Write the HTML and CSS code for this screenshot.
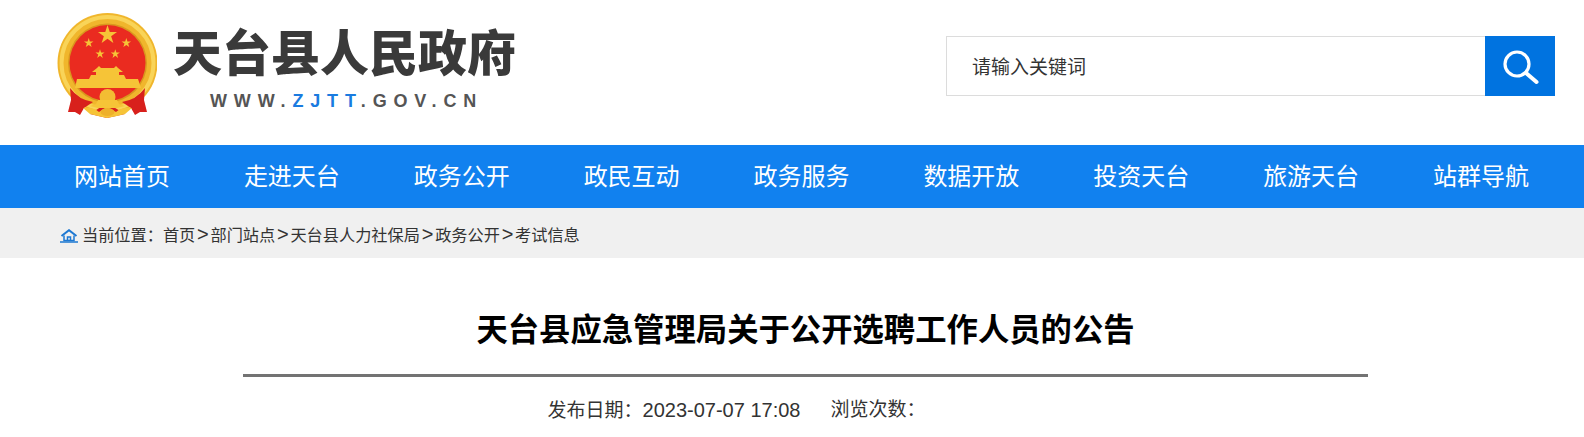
FILE: index.html
```html
<!DOCTYPE html>
<html lang="zh-CN">
<head>
<meta charset="utf-8">
<title>天台县应急管理局关于公开选聘工作人员的公告</title>
<link rel="stylesheet" href="styles.css">
</head>
<body>
<header class="header">
  <a class="brand" href="#">
    <svg class="seal" viewBox="0 0 100 108" aria-hidden="true">
      <defs>
        <polygon id="star" points="0,-10 2.25,-3.09 9.51,-3.09 3.63,1.18 5.88,8.09 0,3.82 -5.88,8.09 -3.63,1.18 -9.51,-3.09 -2.25,-3.09"/>
      </defs>
      <circle cx="50.500" cy="51" r="50" fill="#f0b62c"/>
      <circle cx="50.500" cy="51" r="46" fill="none" stroke="#f9d458" stroke-width="4"/>
      <circle cx="50.500" cy="51" r="39.500" fill="#d9971e"/>
      <circle cx="50.500" cy="51" r="38" fill="#ea2b20"/>
      <g class="gold">
        <use href="#star" transform="translate(50.500 23)"/>
        <use href="#star" transform="translate(31.700 31) scale(.5)"/>
        <use href="#star" transform="translate(69.300 31) scale(.5)"/>
        <use href="#star" transform="translate(43 42) scale(.48)"/>
        <use href="#star" transform="translate(58.300 42) scale(.48)"/>
        <path d="M40 56 L42 54 L44 56 H57 L59 54 L61 56 L66 60 H62 V63 H67 L69 67 H32 L34 63 H39 V60 H35 Z"/>
        <path d="M20 67 H81 L84 76 H18 Z"/>
      </g>
      <path class="rib" d="M13 76 Q22 88 36 90 L27 96 L23 103 L18 100 L11 100 L14 88 Z"/>
      <path class="rib" d="M88 76 Q79 88 65 90 L74 96 L78 103 L83 100 L90 100 L87 88 Z"/>
      <path class="rib" d="M33 102 L50 91 L68 102 L50 106 Z"/>
      <circle cx="50.500" cy="85" r="8" fill="#f3bd33"/>
      <path class="gold" d="M41 88 H60 L62 92 L68 94 L60 96 H41 L33 94 L39 92 Z"/>
      <path class="gold" d="M26 96 Q36 95 42 100 L50 95 L59 100 Q65 95 75 96 L68 102 L60 104 L50 106 L41 104 L33 102 Z"/>
      <ellipse cx="50.500" cy="100" rx="7" ry="4" fill="#eeb02a"/>
    </svg>
    <div class="brand-text">
      <div class="brand-name">天台县人民政府</div>
      <div class="brand-url">WWW.<span class="brand-accent">ZJTT</span>.GOV.CN</div>
    </div>
  </a>
  <form class="search">
    <input class="search-input" type="text" placeholder="请输入关键词">
    <button class="search-btn" type="button" aria-label="搜索">
      <svg viewBox="0 0 38 38" class="search-icon" aria-hidden="true">
        <circle cx="16" cy="17" r="12" fill="none" stroke="#fff" stroke-width="3.200"/>
        <path d="M25 26 L35.500 35" fill="none" stroke="#fff" stroke-width="4" stroke-linecap="round"/>
      </svg>
    </button>
  </form>
</header>

<nav class="nav">
  <a href="#">网站首页</a>
  <a href="#">走进天台</a>
  <a href="#">政务公开</a>
  <a href="#">政民互动</a>
  <a href="#">政务服务</a>
  <a href="#">数据开放</a>
  <a href="#">投资天台</a>
  <a href="#">旅游天台</a>
  <a href="#">站群导航</a>
</nav>

<div class="crumbs">
  <svg class="home" viewBox="0 0 18 14" aria-hidden="true">
    <path d="M1.500 7 L9 1.200 L16.500 7" fill="none" stroke="#1d78d2" stroke-width="2"/>
    <path d="M4 6.500 V11.500 H14 V6.500 M7.500 11 V8 H10.500 V11" fill="none" stroke="#1d78d2" stroke-width="1.500"/>
    <path d="M0 13 H18" stroke="#1d78d2" stroke-width="1.500"/>
  </svg>
  <span>当前位置：</span><a href="#">首页</a><i>&gt;</i><a href="#">部门站点</a><i>&gt;</i><a href="#">天台县人力社保局</a><i>&gt;</i><a href="#">政务公开</a><i>&gt;</i><a href="#">考试信息</a>
</div>

<main class="article">
  <h1 class="title">天台县应急管理局关于公开选聘工作人员的公告</h1>
  <div class="meta">
    <span>发布日期：<span class="meta-num">2023-07-07 17:08</span></span>
    <span>浏览次数：</span>
    <span class="meta-count"></span>
  </div>
</main>
</body>
</html>
```
FILE: styles.css
```css
* { box-sizing: border-box; }
html, body { margin: 0; padding: 0; overflow: hidden; }
body {
  background: #fff;
  color: #333;
  font-family: "Liberation Sans", "Noto Sans CJK SC", sans-serif;
}
a { color: inherit; text-decoration: none; }

.header {
  height: 145px;
  display: flex;
  align-items: flex-start;
  justify-content: space-between;
  padding: 12px 29px 0 57px;
}
.brand { display: flex; align-items: flex-start; gap: 16px; }
.seal { width: 100px; height: 108px; display: block; flex: none; }
.rib { fill: #d8201c; }
.gold { fill: #f6c437; }
.brand-text { padding-top: 8px; }
.brand-name {
  font-family: "Noto Sans CJK SC", sans-serif;
  font-size: 49px;
  line-height: 60px;
  font-weight: 900;
  color: #3a3a3a;
  white-space: nowrap;
}
.brand-url {
  margin: 11px 0 0 37px;
  font-size: 18px;
  line-height: 20px;
  font-weight: 700;
  letter-spacing: 6.850px;
  color: #555;
  white-space: nowrap;
}
.brand-accent { color: #1a7be0; }

.search {
  display: flex;
  width: 609px;
  height: 60px;
  margin-top: 24px;
}
.search-input {
  flex: 1;
  min-width: 0;
  height: 100%;
  border: 1px solid #dcdcdc;
  border-right: 0;
  padding: 3px 0 0 25px;
  font: 19px "Liberation Sans", "Noto Sans CJK SC", sans-serif;
  color: #333;
  outline: 0;
}
.search-input::placeholder { color: #333; opacity: 1; }
.search-btn {
  width: 70px;
  height: 100%;
  border: 0;
  padding: 0;
  background: #0073e0;
  display: flex;
  align-items: center;
  justify-content: center;
}
.search-icon { width: 38px; height: 38px; display: block; }

.nav {
  height: 63px;
  background: #1181ef;
  display: flex;
  justify-content: space-between;
  padding: 1px 55px 0 74px;
  align-items: center;
}
.nav a {
  color: #fff;
  font-size: 24px;
  line-height: 62px;
  white-space: nowrap;
}

.crumbs {
  height: 50px;
  background: #f0f0f0;
  display: flex;
  align-items: center;
  padding: 2px 0 0 60px;
  font-size: 16.200px;
  color: #333;
}
.home { width: 18px; height: 14px; margin: 3px 4px 0 0; flex: none; }
.crumbs i {
  font-style: normal;
  font-size: 20px;
  line-height: 1;
  padding: 0 1.750px;
}

.article { width: 1125px; margin-left: 243px; }
.title {
  margin: 0;
  padding: 50px 0 20px;
  border-bottom: 3px solid #737373;
  text-align: center;
  font-size: 31.350px;
  line-height: 46px;
  font-weight: 700;
  color: #000;
}
.meta {
  display: flex;
  justify-content: center;
  gap: 30px;
  padding-top: 20px;
  font-size: 19px;
  line-height: 26px;
  color: #333;
}
.meta-num { font-size: 20px; }
.meta-count { width: 108px; }
```
